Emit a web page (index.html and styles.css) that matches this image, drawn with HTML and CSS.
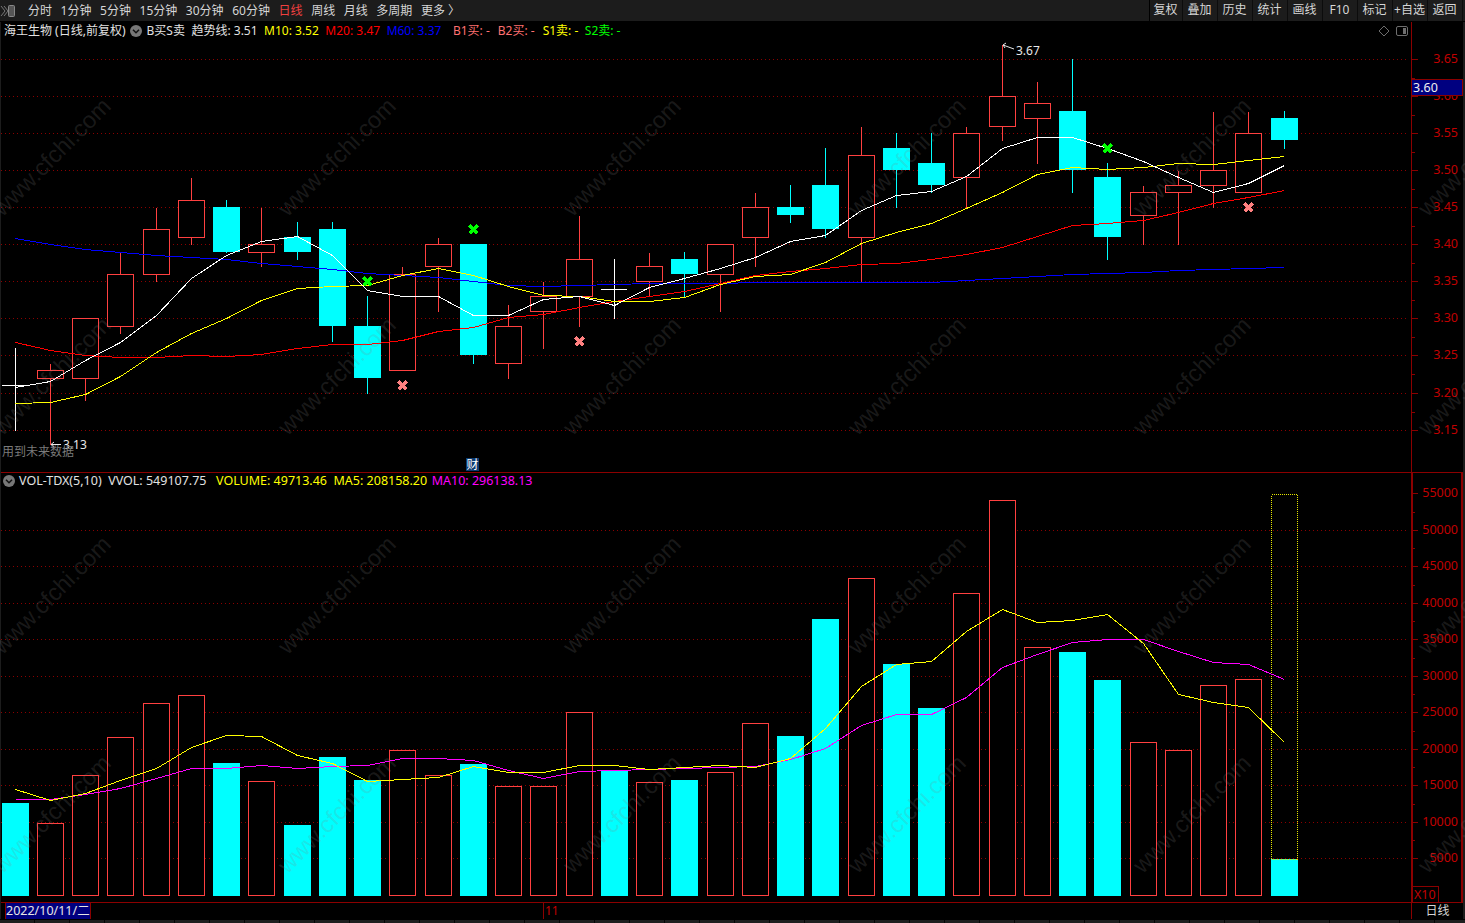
FILE: index.html
```html
<!DOCTYPE html>
<html lang="zh-CN">
<head>
<meta charset="utf-8">
<title>海王生物 日线</title>
<link rel="stylesheet" href="styles.css">
</head>
<body>
<div class="app">
  <header class="toolbar">
    <div class="periods">
      <svg class="collapse" viewBox="0 0 16 14" width="16" height="14">
        <path class="collapse-chevron" d="M1 2 L5 7 L1 12 M4 2 L8 7 L4 12"/>
        <rect class="collapse-box" x="8.5" y="1.5" width="6" height="11" rx="1"/>
      </svg>
      <span class="period">分时</span>
      <span class="period">1分钟</span>
      <span class="period">5分钟</span>
      <span class="period">15分钟</span>
      <span class="period">30分钟</span>
      <span class="period">60分钟</span>
      <span class="period period-active">日线</span>
      <span class="period">周线</span>
      <span class="period">月线</span>
      <span class="period">多周期</span>
      <span class="period">更多 〉</span>
    </div>
    <nav class="actions">
      <span class="action action-first">复权</span>
      <span class="action">叠加</span>
      <span class="action">历史</span>
      <span class="action">统计</span>
      <span class="action">画线</span>
      <span class="action">F10</span>
      <span class="action">标记</span>
      <span class="action">+自选</span>
      <span class="action">返回</span>
    </nav>
  </header>

  <section class="pane pane-price">
    <div class="plot">
      <svg id="price-plot" class="plot-svg" viewBox="1 22 1410 450" width="1410" height="450"></svg>
      <div class="legend">
        <span class="item item-name">海王生物 (日线,前复权)</span>
        <svg class="chev chev-price" viewBox="0 0 12 12" width="12" height="12"><circle class="chev-disc" cx="6" cy="6" r="6"/><path class="chev-mark" d="M3 4.8 L6 7.8 L9 4.8"/></svg>
        <span class="item">B买S卖</span>
        <span class="item">趋势线: 3.51</span>
        <span class="item c-yellow">M10: 3.52</span>
        <span class="item c-red">M20: 3.47</span>
        <span class="item c-blue">M60: 3.37</span>
        <span class="item c-pink item-wide">B1买: -</span>
        <span class="item c-pink item-sig">B2买: -</span>
        <span class="item c-yellow item-sig">S1卖: -</span>
        <span class="item c-green">S2卖: -</span>
      </div>
      <div class="corner-tools">
        <svg viewBox="0 0 12 12" width="12" height="12"><path class="tool-line" d="M6 1 L11 6 L6 11 L1 6 Z"/></svg>
        <svg viewBox="0 0 12 12" width="12" height="12"><rect class="tool-line" x="0.5" y="1.5" width="11" height="9" rx="1.5"/><rect class="tool-fill" x="7" y="3" width="3" height="6"/></svg>
      </div>
    </div>
    <svg id="price-axis" class="axis-svg" viewBox="1411 22 52 450" width="52" height="450"></svg>
  </section>

  <section class="pane pane-volume">
    <div class="plot">
      <svg id="volume-plot" class="plot-svg" viewBox="1 473 1410 429" width="1410" height="429"></svg>
      <div class="legend legend-volume">
        <svg class="chev chev-volume" viewBox="0 0 12 12" width="12" height="12"><circle class="chev-disc" cx="6" cy="6" r="6"/><path class="chev-mark" d="M3 4.8 L6 7.8 L9 4.8"/></svg>
        <span class="item">VOL-TDX(5,10)</span>
        <span class="item">VVOL: 549107.75</span>
        <span class="item c-yellow item-volume">VOLUME: 49713.46</span>
        <span class="item c-yellow">MA5: 208158.20</span>
        <span class="item c-magenta item-ma10">MA10: 296138.13</span>
      </div>
    </div>
    <svg id="volume-axis" class="axis-svg" viewBox="1411 473 52 429" width="52" height="429"></svg>
  </section>

  <footer class="timeline">
    <div class="times">
      <span class="date">2022/10/11/二</span>
      <span class="month">11</span>
    </div>
    <span class="scale-name">日线</span>
  </footer>
  <div class="statusbar"></div>

  <div class="watermarks" aria-hidden="true">
    <span>www.cfchi.com</span><span>www.cfchi.com</span><span>www.cfchi.com</span><span>www.cfchi.com</span><span>www.cfchi.com</span><span>www.cfchi.com</span>
    <span>www.cfchi.com</span><span>www.cfchi.com</span><span>www.cfchi.com</span><span>www.cfchi.com</span><span>www.cfchi.com</span><span>www.cfchi.com</span>
    <span>www.cfchi.com</span><span>www.cfchi.com</span><span>www.cfchi.com</span><span>www.cfchi.com</span><span>www.cfchi.com</span><span>www.cfchi.com</span>
    <span>www.cfchi.com</span><span>www.cfchi.com</span><span>www.cfchi.com</span><span>www.cfchi.com</span><span>www.cfchi.com</span><span>www.cfchi.com</span>
  </div>
</div>
<script src="script.js"></script>
</body>
</html>
```
FILE: styles.css
```css
* { box-sizing: border-box; }
html, body { margin: 0; padding: 0; background: #000; }
body { font-family: "Noto Sans", "Noto Sans CJK SC", sans-serif; font-size: 12px; line-height: 16px; }

.app { position: relative; width: 1465px; height: 923px; overflow: hidden; background: #1c1c1c; display: flex; flex-direction: column; }

.toolbar { height: 22px; flex: none; display: flex; justify-content: space-between; border-bottom: 1px solid #000; color: #d6d6d6; background: #1c1c1c; }
.periods { display: flex; align-items: center; gap: 8.6px; }
.collapse { margin-right: 3.4px; }
.collapse-chevron { fill: none; stroke: #777; stroke-width: 1; }
.collapse-box { fill: #555; stroke: #888; stroke-width: 1; }
.period { white-space: nowrap; }
.period-active { color: #f04040; }
.actions { display: flex; margin-right: 2.5px; border-left: 1px solid #000; }
.action { width: 35px; text-align: center; border-right: 1px solid #0c0c0c; line-height: 20px; white-space: nowrap; }
.action-first { width: 33px; }

.pane { display: flex; flex: none; background: #000; margin-left: 1px; margin-right: 2px; }
.pane-price { height: 450px; }
.pane-volume { height: 431px; border-top: 1px solid #8b0000; border-bottom: 1px solid #8b0000; }
.plot { position: relative; width: 1410px; flex: none; }
.plot-svg { display: block; }
.axis-svg { display: block; flex: none; }

.legend { position: absolute; left: 3px; top: 1px; display: flex; align-items: center; gap: 6.5px; height: 16px; color: #e2e2e2; white-space: nowrap; }
.legend-volume { left: 2px; top: 0; font-size: 12.5px; }
.item-name { margin-right: -2px; }
.chev-price { margin-right: -2px; }
.chev-volume { margin-right: -2.5px; }
.item-wide { margin-left: 5px; }
.item-sig { margin-left: 1.5px; }
.item-volume { margin-left: 3px; }
.item-ma10 { margin-left: -2px; }
.chev-disc { fill: #777; }
.chev-mark { fill: none; stroke: #111; stroke-width: 1.5; }
.c-yellow { color: #ffff00; }
.c-red { color: #ff0000; }
.c-blue { color: #0000ff; }
.c-pink { color: #ff7070; }
.c-green { color: #00ff00; }
.c-magenta { color: #ff00ff; }

.corner-tools { position: absolute; right: 3px; top: 3px; display: flex; gap: 6px; }
.tool-line { fill: none; stroke: #6e6e6e; stroke-width: 1; }
.tool-fill { fill: #6e6e6e; }

.axis-line { stroke: #8b0000; stroke-width: 1; }
.axis-bold { stroke: #8b0000; stroke-width: 2; }
.axis-tick { stroke: #8b0000; stroke-width: 1; shape-rendering: crispEdges; }
.axis-label { fill: #c00000; font-size: 12.5px; text-anchor: end; }
.axis-label-start { text-anchor: start; }
.price-box { fill: #000080; stroke: #8b0000; stroke-width: 1; shape-rendering: crispEdges; }
.price-box-text { fill: #f0f0f0; font-size: 12.5px; }
.x10-box { fill: #000; stroke: #8b0000; stroke-width: 1; shape-rendering: crispEdges; }

.grid-line { stroke: #8b0000; stroke-width: 1; stroke-dasharray: 1 3; shape-rendering: crispEdges; }
.up { fill: #000; stroke: #ff4040; stroke-width: 1; shape-rendering: crispEdges; }
.down { fill: #00ffff; shape-rendering: crispEdges; }
.wick-up { stroke: #ff4040; stroke-width: 1; shape-rendering: crispEdges; }
.wick-down { stroke: #00ffff; stroke-width: 1; shape-rendering: crispEdges; }
.wick-flat { stroke: #ffffff; stroke-width: 1; shape-rendering: crispEdges; }
.ma { fill: none; stroke-width: 1; shape-rendering: crispEdges; }
.ma-white { stroke: #ffffff; }
.ma-yellow { stroke: #ffff00; }
.ma-red { stroke: #ff0000; }
.ma-blue { stroke: #0000ff; }
.ma-magenta { stroke: #ff00ff; }
.mark { fill: none; stroke-width: 3; shape-rendering: crispEdges; }
.mark-buy { stroke: #00ff00; }
.mark-sell { stroke: #ff8080; }
.peak-arrow { fill: none; stroke: #e8e8e8; stroke-width: 1; }
.peak-text { fill: #e8e8e8; font-size: 12px; }
.note-text { fill: #7a7a7a; font-size: 12px; }
.cai-box { fill: #0b3a70; }
.cai-text { fill: #ffffff; font-size: 12px; text-anchor: middle; }
.outline-dotted { fill: none; stroke: #e6e600; stroke-width: 1; stroke-dasharray: 1 1; shape-rendering: crispEdges; }

.timeline { height: 16px; flex: none; display: flex; margin-left: 1px; margin-right: 2px; background: #000; }
.times { width: 1410px; flex: none; display: flex; }
.date { margin-left: 4px; width: 86px; padding-left: 0; background: #000080; border-left: 1px solid #8b0000; border-right: 1px solid #8b0000; color: #e6e6e6; font-size: 12.5px; line-height: 15px; white-space: nowrap; }
.month { margin-left: 452px; padding-left: 1px; border-left: 1px solid #8b0000; color: #c00000; line-height: 16px; }
.scale-name { flex: 1; border-left: 1px solid #8b0000; text-align: center; color: #d6d6d6; }

.statusbar { flex: 1; background: repeating-linear-gradient(90deg, #1e1e1e 0, #1e1e1e 34px, #050505 34px, #050505 35px); border-top: 1px solid #000; }

.watermarks { position: absolute; left: -91px; top: 47px; display: grid; grid-template-columns: repeat(6, 285px); grid-auto-rows: 219px; pointer-events: none; }
.watermarks span { display: flex; align-items: center; justify-content: center; font-family: "Liberation Sans", sans-serif; font-size: 23.5px; color: rgba(128, 128, 128, 0.2); transform: rotate(-45deg); white-space: nowrap; }
```
FILE: script.js
```js
const NS = 'http://www.w3.org/2000/svg';

function add(svg, tag, attrs, text) {
  const el = document.createElementNS(NS, tag);
  for (const key in attrs) el.setAttribute(key, attrs[key]);
  if (text !== undefined) el.textContent = text;
  svg.appendChild(el);
  return el;
}

// x column, kind (u up / d down / f flat), body top, body bottom, wick top, wick bottom
const candles = [
  [15, 'f', 385, 385, 348, 430], [50, 'u', 370, 378, 364, 444], [85, 'u', 318, 378, 318, 400],
  [120, 'u', 274, 326, 252, 333], [156, 'u', 229, 274, 208, 281], [191, 'u', 200, 237, 178, 244],
  [226, 'd', 207, 252, 200, 252], [261, 'u', 244, 252, 208, 266], [297, 'd', 237, 252, 222, 259],
  [332, 'd', 229, 326, 222, 341], [367, 'd', 326, 378, 296, 393], [402, 'u', 274, 370, 267, 370],
  [438, 'u', 244, 266, 238, 311], [473, 'd', 244, 355, 244, 363], [508, 'u', 326, 363, 305, 378],
  [543, 'u', 296, 311, 282, 348], [579, 'u', 259, 296, 216, 326], [614, 'f', 289, 289, 259, 318],
  [649, 'u', 266, 281, 253, 296], [684, 'd', 259, 274, 252, 296], [720, 'u', 244, 274, 244, 311],
  [755, 'u', 207, 237, 193, 266], [790, 'd', 207, 215, 185, 222], [825, 'd', 185, 229, 148, 237],
  [861, 'u', 155, 237, 127, 281], [896, 'd', 148, 170, 133, 207], [931, 'd', 163, 185, 133, 192],
  [966, 'u', 133, 177, 127, 207], [1002, 'u', 96, 126, 45, 140], [1037, 'u', 103, 118, 82, 163],
  [1072, 'd', 111, 170, 59, 192], [1107, 'd', 177, 237, 163, 259], [1143, 'u', 192, 215, 186, 244],
  [1178, 'u', 185, 192, 171, 244], [1213, 'u', 170, 185, 112, 207], [1248, 'u', 133, 192, 112, 192],
  [1284, 'd', 118, 140, 111, 148]
];
const xs = candles.map(c => c[0]);

const ma5 = [387, 381, 360, 342, 315, 278, 255, 241, 236, 255, 290, 296, 296, 315, 315, 299, 296, 305, 287, 278, 268, 257, 241, 235, 210, 195, 191, 176, 148, 137, 137, 148, 161, 177, 192, 183, 165];
const ma10 = [403, 402, 394, 376, 352, 333, 318, 300, 288, 286, 285, 275, 268, 275, 286, 295, 296, 301, 301, 297, 284, 276, 274, 262, 243, 232, 223, 208, 192, 174, 167, 169, 167, 163, 164, 160, 156];
const ma20 = [342, 350, 355, 357, 357, 355, 356, 354, 348, 344, 344, 340, 331, 327, 317, 314, 307, 301, 296, 291, 283, 275, 271, 268, 264, 263, 259, 254, 247, 236, 225, 223, 220, 212, 203, 197, 190];
const ma60 = [238, 244, 249, 252, 255, 257, 259, 263, 266, 269, 273, 275, 277, 281, 285, 286, 285, 284, 283, 283, 283, 282, 282, 282, 282, 282, 282, 280, 278, 276, 274, 273, 272, 270, 269, 268, 267];

const volTops = [803, 823, 775, 737, 703, 695, 763, 781, 825, 757, 780, 750, 775, 764, 786, 786, 712, 771, 782, 780, 772, 723, 736, 619, 578, 664, 708, 593, 500, 647, 652, 680, 742, 750, 685, 679, 859];
const volKinds = [
  'd','u','u','u','u','u','d','u','d','d','d','u','u','d','u','u','u','d','u','d',
  'u','u','d','d','u','d','d','u','u','u','d','d','u','u','u','u','d'
];
const volMa5 = [789, 800, 793, 780, 768, 747, 735, 736, 755, 763, 781, 779, 777, 766, 772, 772, 765, 765, 769, 767, 765, 767, 758, 728, 686, 664, 661, 631, 609, 622, 620, 614, 643, 694, 702, 707, 742];
const volMa10 = [799, 799, 794, 788, 778, 768, 768, 765, 768, 766, 765, 758, 758, 760, 770, 778, 771, 770, 769, 768, 767, 766, 759, 748, 725, 714, 714, 697, 667, 654, 642, 639, 639, 651, 662, 664, 679];

const priceRows = [[3.65, 59], [3.60, 96], [3.55, 133], [3.50, 170], [3.45, 207], [3.40, 244], [3.35, 281], [3.30, 318], [3.25, 355], [3.20, 393], [3.15, 430]];
const volRows = [[55000, 493, false], [50000, 530], [45000, 566], [40000, 603], [35000, 639], [30000, 676], [25000, 712], [20000, 749], [15000, 785], [10000, 822], [5000, 858]];

function gridLines(svg, rows) {
  rows.forEach(r => {
    if (r[2] !== false) add(svg, 'line', { x1: 1, x2: 1408, y1: r[1] + 0.5, y2: r[1] + 0.5, class: 'grid-line' });
  });
}

function maLine(svg, values, cls) {
  const pts = values.map((y, i) => (xs[i] + 0.5) + ',' + (y + 0.5)).join(' ');
  add(svg, 'polyline', { points: pts, class: 'ma ' + cls });
}

function axisLabels(svg, rows, first) {
  rows.forEach((r, i) => {
    const y = r[1] + 0.5;
    add(svg, 'line', { x1: 1411, x2: 1418, y1: y, y2: y, class: 'axis-tick' });
    if (i < rows.length - 1) {
      const my = Math.round((r[1] + rows[i + 1][1]) / 2) + 0.5;
      add(svg, 'line', { x1: 1411, x2: 1415, y1: my, y2: my, class: 'axis-tick' });
    }
    add(svg, 'text', { x: 1458, y: r[1] + 4, class: 'axis-label' }, first(r[0]));
  });
}

/* Price pane */
const pp = document.getElementById('price-plot');
gridLines(pp, priceRows);
candles.forEach(([x, kind, top, bottom, wt, wb]) => {
  const cx = x + 0.5;
  const wick = kind === 'u' ? 'wick-up' : kind === 'd' ? 'wick-down' : 'wick-flat';
  add(pp, 'line', { x1: cx, x2: cx, y1: wt, y2: wb + 1, class: wick });
  if (kind === 'u') add(pp, 'rect', { x: x - 13 + 0.5, y: top + 0.5, width: 26, height: bottom - top, class: 'up' });
  if (kind === 'd') add(pp, 'rect', { x: x - 13, y: top, width: 27, height: bottom - top, class: 'down' });
  if (kind === 'f') add(pp, 'line', { x1: x - 13, x2: x + 13, y1: top + 0.5, y2: top + 0.5, class: wick });
});
maLine(pp, ma60, 'ma-blue');
maLine(pp, ma20, 'ma-red');
maLine(pp, ma10, 'ma-yellow');
maLine(pp, ma5, 'ma-white');
[[367, 281, 'buy'], [473, 229, 'buy'], [1107, 148, 'buy'], [402, 385, 'sell'], [579, 341, 'sell'], [1248, 207, 'sell']].forEach(([x, y, k]) => {
  add(pp, 'path', { d: `M${x - 3.5} ${y - 3.5}L${x + 4.5} ${y + 4.5}M${x + 4.5} ${y - 3.5}L${x - 3.5} ${y + 4.5}`, class: 'mark mark-' + k });
});
add(pp, 'path', { d: 'M1003 45 L1014 49 M1003 45 L1006 43 M1003 45 L1005 48', class: 'peak-arrow' });
add(pp, 'text', { x: 1016, y: 55, class: 'peak-text' }, '3.67');
add(pp, 'path', { d: 'M51 444.5 L61 444.5 M51 444.5 L54 442 M51 444.5 L54 447', class: 'peak-arrow' });
add(pp, 'text', { x: 63, y: 449, class: 'peak-text' }, '3.13');
add(pp, 'text', { x: 2, y: 456, class: 'note-text' }, '用到未来数据');
add(pp, 'rect', { x: 466, y: 458, width: 13, height: 13, class: 'cai-box' });
add(pp, 'text', { x: 472.5, y: 469, class: 'cai-text' }, '财');

const pa = document.getElementById('price-axis');
add(pa, 'line', { x1: 1411.5, x2: 1411.5, y1: 22, y2: 472, class: 'axis-line' });
axisLabels(pa, priceRows, v => v.toFixed(2));
add(pa, 'rect', { x: 1411.5, y: 79.5, width: 51, height: 16, class: 'price-box' });
add(pa, 'text', { x: 1413, y: 91.5, class: 'price-box-text' }, '3.60');

/* Volume pane */
const vp = document.getElementById('volume-plot');
gridLines(vp, volRows);
xs.forEach((x, i) => {
  const top = volTops[i];
  if (volKinds[i] === 'u') add(vp, 'rect', { x: x - 13 + 0.5, y: top + 0.5, width: 26, height: 895 - top, class: 'up' });
  else add(vp, 'rect', { x: x - 13, y: top, width: 27, height: 896 - top, class: 'down' });
});
add(vp, 'rect', { x: 1271.5, y: 494.5, width: 26, height: 365, class: 'outline-dotted' });
maLine(vp, volMa10, 'ma-magenta');
maLine(vp, volMa5, 'ma-yellow');

const va = document.getElementById('volume-axis');
add(va, 'line', { x1: 1412, x2: 1412, y1: 473, y2: 902, class: 'axis-bold' });
add(va, 'line', { x1: 1462, x2: 1462, y1: 473, y2: 902, class: 'axis-bold' });
axisLabels(va, volRows, v => String(v));
add(va, 'rect', { x: 1412.5, y: 886.5, width: 26, height: 16, class: 'x10-box' });
add(va, 'text', { x: 1414, y: 899, class: 'axis-label axis-label-start' }, 'X10');
```
